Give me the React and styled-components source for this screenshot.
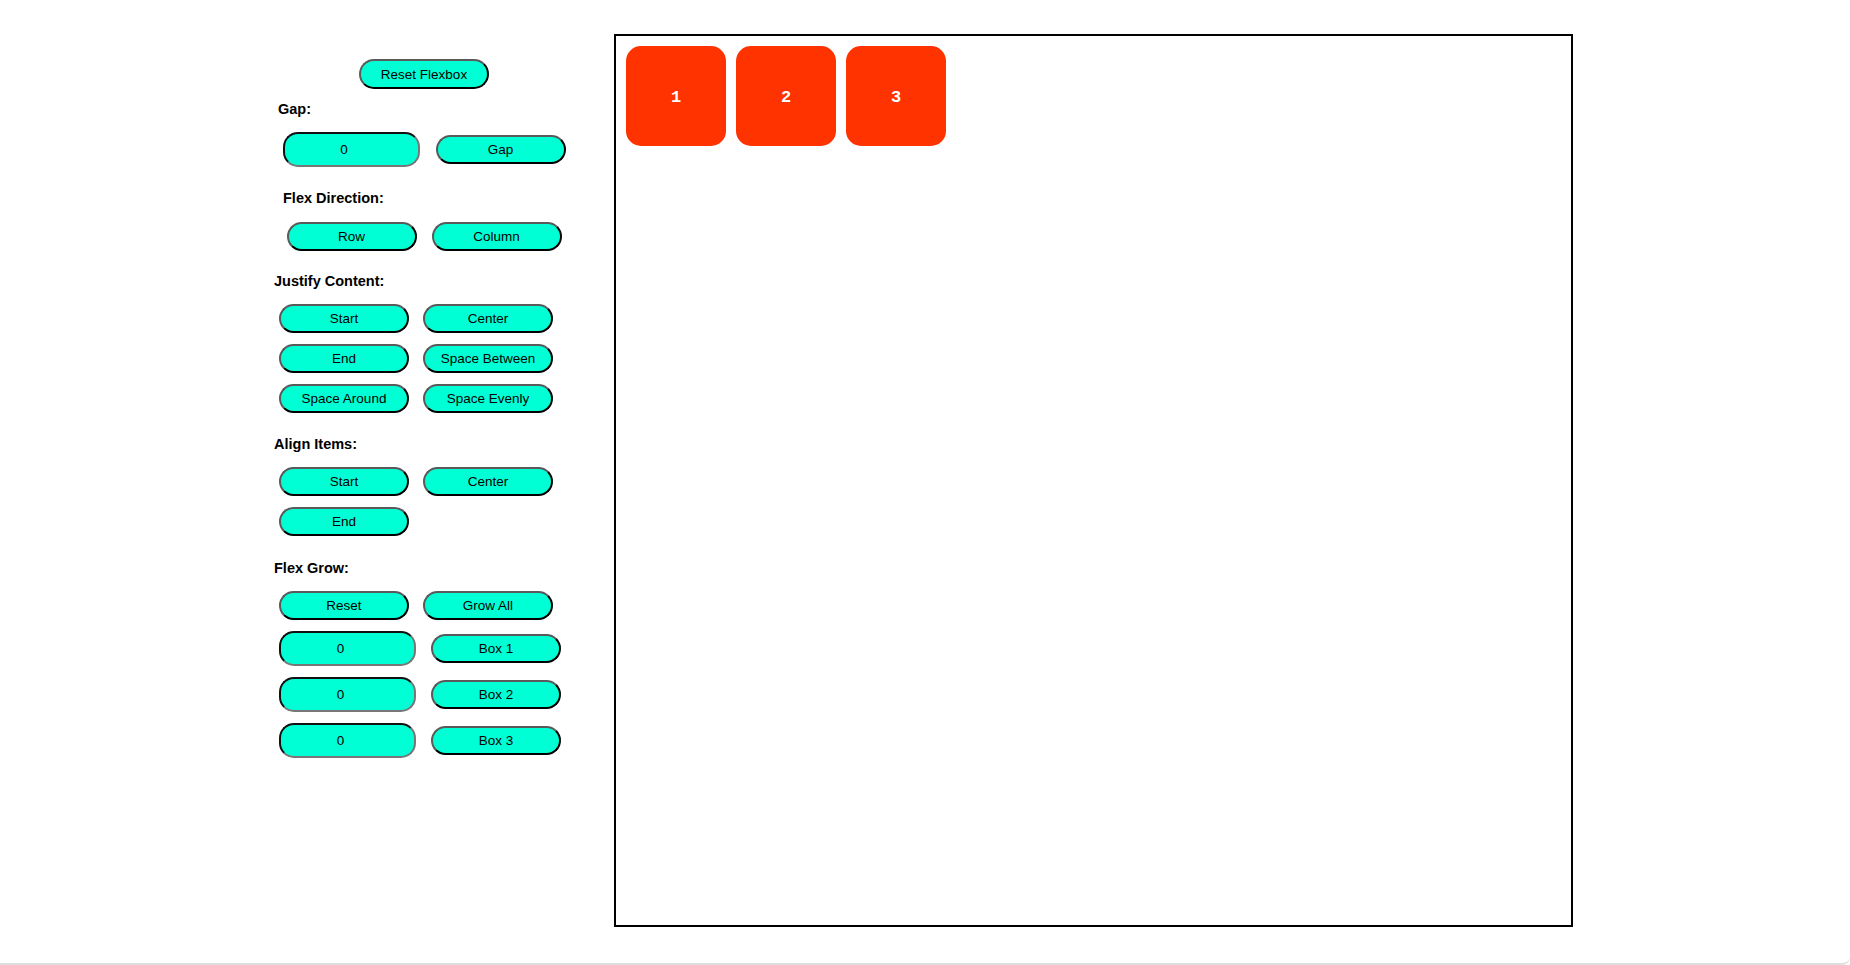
import React, { useState } from 'react';
import styled, { createGlobalStyle } from 'styled-components';

const GlobalStyle = createGlobalStyle`
  html, body {
    margin: 0;
    padding: 0;
    background: #ffffff;
  }
  body {
    font-family: "Liberation Sans", Arial, sans-serif;
  }
`;

const Page = styled.div`
  box-sizing: border-box;
  width: 1850px;
  height: 965px;
  display: flex;
  align-items: flex-start;
  gap: 40px;
  padding-left: 274px;
  border-bottom: 2px solid #dedede;
  border-bottom-right-radius: 8px;
  overflow: hidden;
`;

const Panel = styled.div`
  width: 300px;
  display: flex;
  flex-direction: column;
  padding-top: 59px;
`;

const Label = styled.div`
  font-family: "Liberation Sans", Arial, sans-serif;
  font-weight: bold;
  font-size: 14.5px;
  line-height: 17px;
  color: #000;
  margin-top: ${props => props.top}px;
  margin-left: ${props => props.left || 0}px;
`;

const CenterRow = styled.div`
  display: flex;
  justify-content: center;
  align-items: center;
  gap: ${props => props.gap || 15}px;
  margin-top: ${props => props.top || 0}px;
`;

const ButtonGrid = styled.div`
  display: grid;
  grid-template-columns: 130px 130px;
  column-gap: 14px;
  row-gap: 11px;
  margin-top: 14px;
  margin-left: 5px;
`;

const GrowList = styled.div`
  display: flex;
  flex-direction: column;
  gap: 11px;
  margin-top: 11px;
  margin-left: 5px;
`;

const GrowRow = styled.div`
  display: flex;
  align-items: center;
  gap: 15px;
`;

const Button = styled.button`
  box-sizing: border-box;
  width: ${props => props.width || 130}px;
  height: ${props => props.height || 29}px;
  padding: 0;
  background: #00ffd5;
  border: 2px solid;
  border-color: #5a5a5a #000 #000 #5a5a5a;
  border-radius: 15px;
  font-family: "Liberation Sans", Arial, sans-serif;
  font-size: 13.5px;
  color: #000;
  cursor: pointer;
`;

const NumberInput = styled.input`
  box-sizing: border-box;
  width: 137px;
  height: 35px;
  padding: 0 14px 0 0;
  background: #00ffd5;
  border: 2px solid;
  border-color: #111 #777 #777 #111;
  border-radius: 15px;
  font-family: "Liberation Sans", Arial, sans-serif;
  font-size: 13.5px;
  color: #000;
  text-align: center;
  outline: none;
`;

const Container = styled.div`
  box-sizing: border-box;
  width: 959px;
  height: 893px;
  margin-top: 34px;
  border: 2px solid #000;
  padding: 10px;
  display: flex;
  flex-direction: ${props => props.direction};
  justify-content: ${props => props.justify};
  align-items: ${props => props.align};
  gap: ${props => props.gap}px;
`;

const Box = styled.div`
  box-sizing: border-box;
  width: 100px;
  height: 100px;
  padding-top: 3px;
  flex-shrink: 0;
  flex-grow: ${props => props.grow};
  background: #ff3300;
  border-radius: 15px;
  display: flex;
  align-items: center;
  justify-content: center;
  color: #fff;
  font-family: "Liberation Mono", "Courier New", monospace;
  font-weight: bold;
  font-size: 17px;
`;

const justifyOptions = [
  ['Start', 'flex-start'],
  ['Center', 'center'],
  ['End', 'flex-end'],
  ['Space Between', 'space-between'],
  ['Space Around', 'space-around'],
  ['Space Evenly', 'space-evenly'],
];

const alignOptions = [
  ['Start', 'flex-start'],
  ['Center', 'center'],
  ['End', 'flex-end'],
];

const initial = {
  gap: 10,
  direction: 'row',
  justify: 'flex-start',
  align: 'flex-start',
  grow: [0, 0, 0],
};

export default function App() {
  const [layout, setLayout] = useState(initial);
  const [gapInput, setGapInput] = useState('0');
  const [growInputs, setGrowInputs] = useState(['0', '0', '0']);

  const update = changes => setLayout(prev => ({ ...prev, ...changes }));

  const setGrow = (index, value) => {
    const grow = [...layout.grow];
    grow[index] = Number(value) || 0;
    update({ grow });
  };

  return (
    <Page>
      <GlobalStyle />
      <Panel>
        <CenterRow>
          <Button height={30} onClick={() => setLayout(initial)}>
            Reset Flexbox
          </Button>
        </CenterRow>

        <Label top={12} left={4}>Gap:</Label>
        <CenterRow top={14} gap={16}>
          <NumberInput
            value={gapInput}
            onChange={e => setGapInput(e.target.value)}
          />
          <Button onClick={() => update({ gap: Number(gapInput) || 0 })}>Gap</Button>
        </CenterRow>

        <Label top={23} left={9}>Flex Direction:</Label>
        <CenterRow top={15}>
          <Button onClick={() => update({ direction: 'row' })}>Row</Button>
          <Button onClick={() => update({ direction: 'column' })}>Column</Button>
        </CenterRow>

        <Label top={22}>Justify Content:</Label>
        <ButtonGrid>
          {justifyOptions.map(([name, value]) => (
            <Button key={name} onClick={() => update({ justify: value })}>
              {name}
            </Button>
          ))}
        </ButtonGrid>

        <Label top={23}>Align Items:</Label>
        <ButtonGrid>
          {alignOptions.map(([name, value]) => (
            <Button key={name} onClick={() => update({ align: value })}>
              {name}
            </Button>
          ))}
        </ButtonGrid>

        <Label top={24}>Flex Grow:</Label>
        <ButtonGrid>
          <Button onClick={() => update({ grow: [0, 0, 0] })}>Reset</Button>
          <Button onClick={() => update({ grow: [1, 1, 1] })}>Grow All</Button>
        </ButtonGrid>
        <GrowList>
          {growInputs.map((value, i) => (
            <GrowRow key={i}>
              <NumberInput
                value={value}
                onChange={e => {
                  const next = [...growInputs];
                  next[i] = e.target.value;
                  setGrowInputs(next);
                }}
              />
              <Button onClick={() => setGrow(i, value)}>Box {i + 1}</Button>
            </GrowRow>
          ))}
        </GrowList>
      </Panel>

      <Container
        direction={layout.direction}
        justify={layout.justify}
        align={layout.align}
        gap={layout.gap}
      >
        {layout.grow.map((grow, i) => (
          <Box key={i} grow={grow}>
            {i + 1}
          </Box>
        ))}
      </Container>
    </Page>
  );
}
